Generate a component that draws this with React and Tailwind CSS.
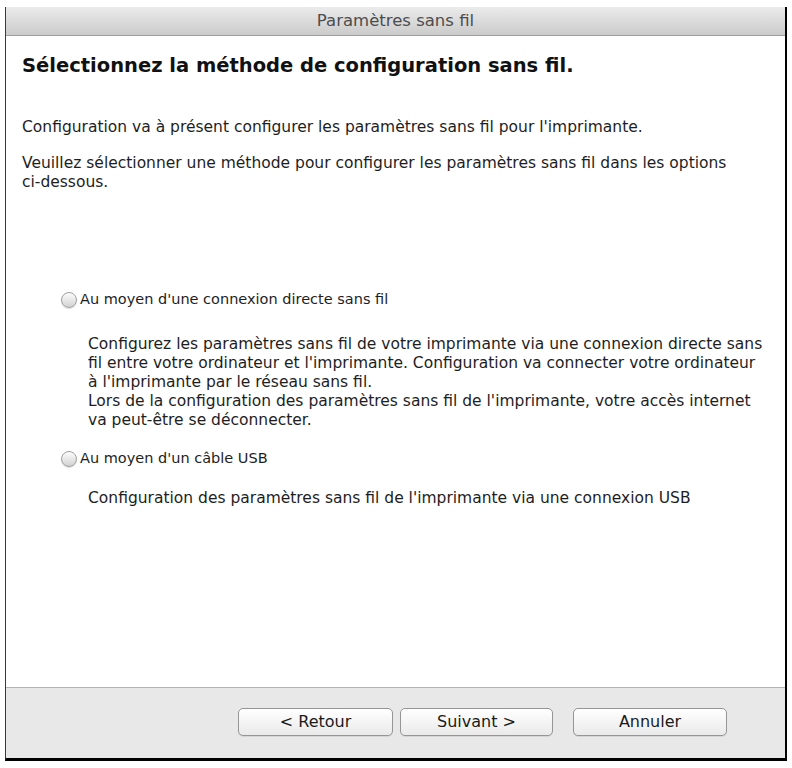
import React, { useState } from 'react';

const font = { fontFamily: '"DejaVu Sans", "Liberation Sans", sans-serif' };

const Radio = ({ checked, onChange, label }) => (
  <label className="flex items-center h-[19px] gap-[3px] cursor-pointer">
    <input type="radio" checked={checked} onChange={onChange} className="hidden" />
    <span className="w-[16px] h-[16px] rounded-full border border-[#a0a0a0] bg-gradient-to-b from-[#fdfdfd] to-[#d2d2d2] shadow-[0_1px_1px_rgba(0,0,0,0.12)] flex items-center justify-center">
      {checked && <span className="w-[7px] h-[7px] rounded-full bg-[#222]" />}
    </span>
    <span className="text-[14.5px] text-[#1e1e1e] whitespace-nowrap">{label}</span>
  </label>
);

const MacButton = ({ children, className = '' }) => (
  <button
    type="button"
    className={`h-[28px] rounded-[5px] border border-[#959595] bg-gradient-to-b from-white to-[#eaeaea] text-[16px] leading-none text-[#1a1a1a] shadow-[0_1px_0_rgba(0,0,0,0.08)] ${className}`}
  >
    {children}
  </button>
);

const Lines = ({ lines, className = '' }) => (
  <p className={`text-[15.5px] leading-[19px] ${className}`}>
    {lines.map((l, i) => (
      <span key={i} className="block whitespace-nowrap">{l}</span>
    ))}
  </p>
);

const App = () => {
  const [method, setMethod] = useState(null);

  return (
    <div className="w-[792px] h-[768px] bg-white pt-[7px] pl-[5px]" style={font}>
      <div className="w-[782px] h-[754px] flex flex-col border-l border-l-[#3a3a3a] border-r-2 border-r-black border-b-[3px] border-b-black">
        <div className="h-[29px] shrink-0 flex items-center justify-center bg-gradient-to-b from-[#ebebeb] to-[#cbcbcb] border-b border-b-[#9f9f9f]">
          <span className="text-[16.5px] text-[#4d4d4d]">Paramètres sans fil</span>
        </div>

        <div className="flex-1 bg-white pl-[16px] pr-[6px] pt-[18px] text-[#1e1e1e]">
          <h1 className="text-[19.5px] font-bold leading-[24px] text-[#111]">
            Sélectionnez la méthode de configuration sans fil.
          </h1>
          <Lines
            className="mt-[40px]"
            lines={["Configuration va à présent configurer les paramètres sans fil pour l'imprimante."]}
          />
          <Lines
            className="mt-[17px]"
            lines={[
              'Veuillez sélectionner une méthode pour configurer les paramètres sans fil dans les options',
              'ci-dessous.',
            ]}
          />

          <div className="mt-[98px] pl-[39px]">
            <Radio
              checked={method === 'direct'}
              onChange={() => setMethod('direct')}
              label="Au moyen d'une connexion directe sans fil"
            />
            <Lines
              className="mt-[26px] ml-[27px]"
              lines={[
                'Configurez les paramètres sans fil de votre imprimante via une connexion directe sans',
                "fil entre votre ordinateur et l'imprimante. Configuration va connecter votre ordinateur",
                "à l'imprimante par le réseau sans fil.",
                "Lors de la configuration des paramètres sans fil de l'imprimante, votre accès internet",
                'va peut-être se déconnecter.',
              ]}
            />

            <div className="mt-[19px]">
              <Radio
                checked={method === 'usb'}
                onChange={() => setMethod('usb')}
                label="Au moyen d'un câble USB"
              />
            </div>
            <Lines
              className="mt-[21px] ml-[27px]"
              lines={["Configuration des paramètres sans fil de l'imprimante via une connexion USB"]}
            />
          </div>
        </div>

        <div className="h-[71px] shrink-0 border-t border-t-[#b4b4b4] bg-[#e8e8e8] flex justify-end items-start pt-[20px] pr-[58px]">
          <MacButton className="w-[155px]">&lt; Retour</MacButton>
          <MacButton className="w-[153px] ml-[7px]">Suivant &gt;</MacButton>
          <MacButton className="w-[154px] ml-[20px]">Annuler</MacButton>
        </div>
      </div>
    </div>
  );
};

export default App;
